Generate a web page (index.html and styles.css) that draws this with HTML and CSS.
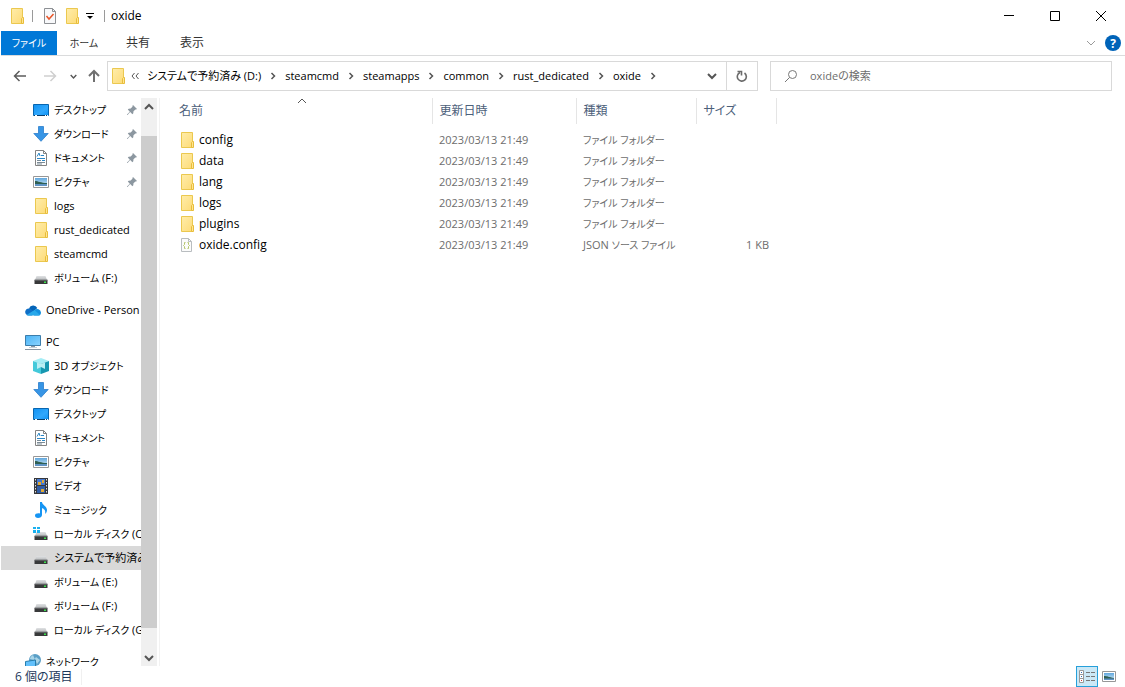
FILE: index.html
```html
<!DOCTYPE html>
<html lang="ja">
<head>
    <meta charset="UTF-8">
    <meta name="viewport" content="width=device-width, initial-scale=1.0">
    <title>oxide</title>
    <link rel="stylesheet" href="styles.css">
</head>
<body>
    <!-- shared icons -->
    <svg class="sprite" aria-hidden="true">
        <defs>
            <linearGradient id="gFolder" x1="0" y1="0" x2="1" y2="1"><stop offset="0" stop-color="#ffedaa"/><stop offset="1" stop-color="#fddb78"/></linearGradient>
            <linearGradient id="gScreen" x1="0" y1="0" x2="1" y2="1"><stop offset="0" stop-color="#1192f2"/><stop offset="0.6" stop-color="#31a8fd"/><stop offset="1" stop-color="#0d92f5"/></linearGradient>
            <linearGradient id="gPc" x1="0" y1="0" x2="1" y2="1"><stop offset="0" stop-color="#49b3f5"/><stop offset="1" stop-color="#8ad3ff"/></linearGradient>
            <linearGradient id="gSky" x1="0" y1="0" x2="0" y2="1"><stop offset="0" stop-color="#5fa6dd"/><stop offset="1" stop-color="#d5ecf6"/></linearGradient>
            <linearGradient id="gDrive" x1="0" y1="0" x2="0" y2="1"><stop offset="0" stop-color="#e0e2e4"/><stop offset="1" stop-color="#b5b8ba"/></linearGradient>
        </defs>
        <symbol id="folder" viewBox="0 0 16 16">
            <path d="M2.5.5h11v15h-11z" fill="url(#gFolder)" stroke="#ebc84f"/>
            <path d="M12.5 15.5v-5l1-1h1v6z" fill="#ffe591" stroke="#e8bd3b"/>
        </symbol>
        <symbol id="desktop" viewBox="0 0 16 16">
            <path d="M.5 2.500h15v11H.5z" fill="url(#gScreen)" stroke="#0866b0"/>
            <path d="M1 13.500h14" stroke="#083e6c"/>
            <path d="M2 13.500h2M12 13.500h1M14 13.500h1" stroke="#fff"/>
        </symbol>
        <symbol id="download" viewBox="0 0 16 16">
            <path d="M5.500.500h5v7h4.700L8 15.300.8 7.500h4.700z" fill="#3795e5" stroke="#2b7dcc" stroke-width=".8"/>
        </symbol>
        <symbol id="document" viewBox="0 0 16 16">
            <path d="M2.500.500h8l3 3v12h-11z" fill="#fff" stroke="#838383"/>
            <path d="M10.500.500v3h3" fill="none" stroke="#838383"/>
            <path d="M4 6.500 6 3l1 3M8 5.500h3M4 8.500h8M9 10.500h3" stroke="#2b86c5" fill="none"/>
            <path d="M4 10.500h4M4 12.500h8M4 14h5" stroke="#7b8b96" fill="none"/>
        </symbol>
        <symbol id="picture" viewBox="0 0 16 16">
            <path d="M.5 2.500h15v11H.5z" fill="#fff" stroke="#979797"/>
            <path d="M2 4h12v8H2z" fill="url(#gSky)"/>
            <path d="M2 7c3 0 6 2 12 2v1H2z" fill="#2e5f52"/>
            <path d="M2 10h12v2H2z" fill="#5f93c4"/>
        </symbol>
        <symbol id="drive" viewBox="0 0 16 16">
            <path d="M3.500 6h9L14 10H2z" fill="url(#gDrive)"/>
            <path d="M1.500 10h13v4h-13z" fill="#38393a"/>
            <path d="M1.500 10h13" stroke="#7c7e80"/>
            <path d="M11 11.500h2v1.500h-2z" fill="#3be04c"/>
        </symbol>
        <symbol id="windrive" viewBox="0 0 16 16">
            <use href="#drive"/>
            <path d="M0 1h3v2H0zM4 1h3v2H4zM0 4h3v3H0zM4 4h3v3H4z" fill="#19b0ef"/>
        </symbol>
        <symbol id="onedrive" viewBox="0 0 16 16">
            <path d="M4 6.500A4.500 4.500 0 0 1 12.300 6L8 10z" fill="#0364b8"/>
            <path d="M3.500 13.500a3.500 3.500 0 1 1 2-6.500L10 10l-3 3.500z" fill="#0f6fc6"/>
            <path d="M9.500 8.200A3.800 3.800 0 0 1 16 10.500c0 2-1 3-2.500 3H9z" fill="#1490df"/>
            <path d="M1.500 13 9.500 8l5.500 5c-.5.400-1 .5-1.500.5h-10c-.8 0-1.500-.1-2-.5z" fill="#28a8ea"/>
        </symbol>
        <symbol id="pc" viewBox="0 0 16 16">
            <path d="M.5 1.500h15v10H.5z" fill="url(#gPc)" stroke="#3c7dab"/>
            <path d="M6 12.500h4M0 15.500h16" stroke="#8896a3"/>
            <path d="M4 13.500h8" stroke="#c5d0d8"/>
        </symbol>
        <symbol id="cube" viewBox="0 0 16 16">
            <path d="m0 3 8-3 8 3-8 3z" fill="#a5edf5"/>
            <path d="m0 3 8 3v10l-8-3z" fill="#43c9da"/>
            <path d="m8 6 8-3v10l-8 3z" fill="#1797b0"/>
            <path d="m4 4.500 4 1.500 4-1.500V11l-4-2-4 2z" fill="#b9eef3"/>
        </symbol>
        <symbol id="video" viewBox="0 0 16 16">
            <path d="M1 0h14v16H1z" fill="#36383c"/>
            <path d="M2.500 1v15M13.500 1v15" stroke="#dedede" stroke-dasharray="1.500 1.500"/>
            <path d="M4 1h8v6H4z" fill="#4679cf"/>
            <path d="M4 8h8v7H4z" fill="#315da5"/>
            <path d="M5 4h3v3H5zM9 2h2v3H9zM8 11h3v3H8z" fill="#e1a932"/>
        </symbol>
        <symbol id="music" viewBox="0 0 16 16">
            <path d="M7 0h2c0 3 5 4 5 8 0 2-1 3-2 4 1-4-1-5-3-6v7c0 2-2 3-4 3s-3-1-3-2.500C2 12 4 11 7 11.500z" fill="#1695f3"/>
        </symbol>
        <symbol id="network" viewBox="0 0 16 16">
            <circle cx="10" cy="6" r="6" fill="#5b9fc6"/>
            <path d="M8 1c-2 1-3 3-3 4l4 1 2-3 4 3-3 4" fill="#a9d4e7"/>
            <path d="m.5 7.500 10-1.500v8l-10 1z" fill="#62c0fb" stroke="#287ead"/>
        </symbol>
        <symbol id="json" viewBox="0 0 16 16">
            <path d="M2.500 1.500h7l3 3v10h-10z" fill="#fbfbfb" stroke="#b9bdc0"/>
            <path d="M9.500 1.500v3h3" fill="none" stroke="#b9bdc0"/>
            <path d="M6.500 5.500h-1v2l-1 1 1 1v2h1M8.500 5.500h1v2l1 1-1 1v2h-1" fill="none" stroke="#b4c56a"/>
        </symbol>
        <symbol id="pin" viewBox="0 0 12 12">
            <path d="m7 1 4 4-1 .6-.6-.2L7.500 7.300l-.2 2-.9.900L4.200 8 1.500 11H1v-.5L3.800 7.700 1.800 5.600l.9-.9 2-.2L6.600 2.600 6.400 2z" fill="#8c97a0"/>
        </symbol>
        <symbol id="down" viewBox="0 0 10 10"><path d="m1 3 4 4 4-4" fill="none" stroke="currentColor" stroke-width="2"/></symbol>
        <symbol id="up" viewBox="0 0 10 10"><path d="m1 7 4-4 4 4" fill="none" stroke="currentColor" stroke-width="2"/></symbol>
        <symbol id="right" viewBox="0 0 10 10"><path d="m3.500 2 3 3-3 3" fill="none" stroke="currentColor" stroke-width="1.500"/></symbol>
    </svg>

    <header class="titlebar">
        <svg class="icon"><use href="#folder"/></svg>
        <span class="sep"></span>
        <button class="quick" aria-label="プロパティ">
            <svg class="icon" viewBox="0 0 16 16"><path d="M2.500.500h8l3 3v12h-11z" fill="#f8f9fb" stroke="#8d9094"/><path d="M10.500.500v3h3" fill="none" stroke="#8d9094"/><path d="m4.500 8 2.500 3 4.500-5" fill="none" stroke="#e8562a" stroke-width="1.500"/></svg>
        </button>
        <button class="quick" aria-label="新しいフォルダー"><svg class="icon"><use href="#folder"/></svg></button>
        <button class="quick more" aria-label="カスタマイズ">
            <svg width="8" height="8" viewBox="0 0 8 8"><path d="M0 1.500h8" stroke="#000"/><path d="M1 4h6L4 7z"/></svg>
        </button>
        <span class="sep"></span>
        <span class="title">oxide</span>
        <div class="window-buttons">
            <button aria-label="最小化"><svg width="10" height="10"><path d="M0 4.500h10" stroke="#000"/></svg></button>
            <button aria-label="最大化"><svg width="10" height="10"><path d="M.5.500h9v9h-9z" fill="none" stroke="#000"/></svg></button>
            <button aria-label="閉じる"><svg width="10" height="10"><path d="m0 0 10 10M10 0 0 10" stroke="#000"/></svg></button>
        </div>
    </header>

    <nav class="ribbon">
        <a class="tab file kana" href="#">ファイル</a>
        <a class="tab kana" href="#">ホーム</a>
        <a class="tab" href="#">共有</a>
        <a class="tab" href="#">表示</a>
        <button class="expand" aria-label="リボンの展開"><svg width="10" height="10" viewBox="0 0 10 10"><path d="m1 3 4 4 4-4" fill="none" stroke="#9a9a9a"/></svg></button>
        <button class="help" aria-label="ヘルプ">?</button>
    </nav>

    <div class="navbar">
        <div class="history">
            <button class="back" aria-label="戻る"><svg width="14" height="12" viewBox="0 0 14 12"><path d="M13 6H2M6.500 1 1.500 6l5 5" fill="none" stroke="#5c5c5c" stroke-width="1.500"/></svg></button>
            <button class="forward" aria-label="進む"><svg width="14" height="12" viewBox="0 0 14 12"><path d="M1 6h11M7.500 1l5 5-5 5" fill="none" stroke="#cfcfcf" stroke-width="1.500"/></svg></button>
            <button class="recent" aria-label="最近表示した場所"><svg width="7" height="7"><use href="#down"/></svg></button>
            <button class="parent" aria-label="上へ"><svg width="12" height="14" viewBox="0 0 12 14"><path d="M6 13V2M1 7l5-5 5 5" fill="none" stroke="#707070" stroke-width="2"/></svg></button>
        </div>
        <div class="address">
            <svg class="icon"><use href="#folder"/></svg>
            <span class="laquo"><svg width="8" height="8" viewBox="0 0 8 8"><path d="M3.500 1 1 4l2.500 3M7.500 1 5 4l2.500 3" fill="none" stroke="#555"/></svg></span>
            <a href="#">システムで予約済み (D:)</a>
            <svg class="crumb"><use href="#right"/></svg>
            <a href="#">steamcmd</a>
            <svg class="crumb"><use href="#right"/></svg>
            <a href="#">steamapps</a>
            <svg class="crumb"><use href="#right"/></svg>
            <a href="#">common</a>
            <svg class="crumb"><use href="#right"/></svg>
            <a href="#">rust_dedicated</a>
            <svg class="crumb"><use href="#right"/></svg>
            <a href="#">oxide</a>
            <svg class="crumb"><use href="#right"/></svg>
            <button class="drop" aria-label="以前の場所"><svg width="10" height="10"><use href="#down"/></svg></button>
            <button class="refresh" aria-label="更新"><svg width="12" height="12" viewBox="0 0 12 12"><path d="M8.500 3A4.500 4.500 0 1 1 4 2.500" fill="none" stroke="#6b6b6b" stroke-width="1.600"/><path d="M1.500 1.500h4v4" fill="none" stroke="#6b6b6b" stroke-width="1.600"/></svg></button>
        </div>
        <label class="search">
            <svg width="12" height="12" viewBox="0 0 12 12"><circle cx="7.500" cy="4.500" r="4" fill="none" stroke="#777"/><path d="M4.500 7.500 0 12" stroke="#777"/></svg>
            <input type="text" placeholder="oxideの検索" aria-label="oxideの検索">
        </label>
    </div>

    <div class="main">
        <nav class="tree">
            <ul>
                <li><a class="kana" href="#"><svg class="icon"><use href="#desktop"/></svg>デスクトップ<svg class="pin"><use href="#pin"/></svg></a></li>
                <li><a class="kana" href="#"><svg class="icon"><use href="#download"/></svg>ダウンロード<svg class="pin"><use href="#pin"/></svg></a></li>
                <li><a class="kana" href="#"><svg class="icon"><use href="#document"/></svg>ドキュメント<svg class="pin"><use href="#pin"/></svg></a></li>
                <li><a class="kana" href="#"><svg class="icon"><use href="#picture"/></svg>ピクチャ<svg class="pin"><use href="#pin"/></svg></a></li>
                <li><a href="#"><svg class="icon"><use href="#folder"/></svg>logs</a></li>
                <li><a href="#"><svg class="icon"><use href="#folder"/></svg>rust_dedicated</a></li>
                <li><a href="#"><svg class="icon"><use href="#folder"/></svg>steamcmd</a></li>
                <li><a href="#"><svg class="icon"><use href="#drive"/></svg><span><span class="kana">ボリューム</span> (F:)</span></a></li>
            </ul>
            <ul>
                <li><a class="root" href="#"><svg class="icon"><use href="#onedrive"/></svg>OneDrive - Person</a></li>
            </ul>
            <ul>
                <li><a class="root" href="#"><svg class="icon"><use href="#pc"/></svg>PC</a></li>
                <li><a href="#"><svg class="icon"><use href="#cube"/></svg><span>3D <span class="kana">オブジェクト</span></span></a></li>
                <li><a class="kana" href="#"><svg class="icon"><use href="#download"/></svg>ダウンロード</a></li>
                <li><a class="kana" href="#"><svg class="icon"><use href="#desktop"/></svg>デスクトップ</a></li>
                <li><a class="kana" href="#"><svg class="icon"><use href="#document"/></svg>ドキュメント</a></li>
                <li><a class="kana" href="#"><svg class="icon"><use href="#picture"/></svg>ピクチャ</a></li>
                <li><a class="kana" href="#"><svg class="icon"><use href="#video"/></svg>ビデオ</a></li>
                <li><a class="kana" href="#"><svg class="icon"><use href="#music"/></svg>ミュージック</a></li>
                <li><a href="#"><svg class="icon"><use href="#windrive"/></svg><span><span class="kana">ローカル ディスク</span> (C:)</span></a></li>
                <li><a class="selected" href="#"><svg class="icon"><use href="#drive"/></svg>システムで予約済み</a></li>
                <li><a href="#"><svg class="icon"><use href="#drive"/></svg><span><span class="kana">ボリューム</span> (E:)</span></a></li>
                <li><a href="#"><svg class="icon"><use href="#drive"/></svg><span><span class="kana">ボリューム</span> (F:)</span></a></li>
                <li><a href="#"><svg class="icon"><use href="#drive"/></svg><span><span class="kana">ローカル ディスク</span> (G:)</span></a></li>
            </ul>
            <ul>
                <li><a class="root kana" href="#"><svg class="icon"><use href="#network"/></svg>ネットワーク</a></li>
            </ul>
        </nav>
        <div class="scrollbar">
            <button aria-label="上へスクロール"><svg width="10" height="10"><use href="#up"/></svg></button>
            <div class="track"><div class="thumb"></div></div>
            <button aria-label="下へスクロール"><svg width="10" height="10"><use href="#down"/></svg></button>
        </div>

        <section class="files">
            <table>
                <thead>
                    <tr>
                        <th class="name">名前<svg class="sort" viewBox="0 0 10 6"><path d="m1 5 4-4 4 4" fill="none" stroke="#555"/></svg></th>
                        <th class="date">更新日時</th>
                        <th class="type">種類</th>
                        <th class="size">サイズ</th>
                    </tr>
                </thead>
                <tbody>
                    <tr><td><a href="#"><svg class="icon"><use href="#folder"/></svg>config</a></td><td>2023/03/13 21:49</td><td class="kana">ファイル フォルダー</td><td></td></tr>
                    <tr><td><a href="#"><svg class="icon"><use href="#folder"/></svg>data</a></td><td>2023/03/13 21:49</td><td class="kana">ファイル フォルダー</td><td></td></tr>
                    <tr><td><a href="#"><svg class="icon"><use href="#folder"/></svg>lang</a></td><td>2023/03/13 21:49</td><td class="kana">ファイル フォルダー</td><td></td></tr>
                    <tr><td><a href="#"><svg class="icon"><use href="#folder"/></svg>logs</a></td><td>2023/03/13 21:49</td><td class="kana">ファイル フォルダー</td><td></td></tr>
                    <tr><td><a href="#"><svg class="icon"><use href="#folder"/></svg>plugins</a></td><td>2023/03/13 21:49</td><td class="kana">ファイル フォルダー</td><td></td></tr>
                    <tr><td><a href="#"><svg class="icon"><use href="#json"/></svg>oxide.config</a></td><td>2023/03/13 21:49</td><td>JSON <span class="kana">ソース ファイル</span></td><td class="num">1 KB</td></tr>
                </tbody>
            </table>
        </section>
    </div>

    <footer class="status">
        <span class="count">6 個の項目</span>
        <div class="views">
            <button class="active" aria-label="詳細"><svg width="18" height="16" viewBox="0 0 18 16"><path d="M1.500 1.500h4v12h-4zM1.500 5.500h4M1.500 9.500h4" fill="#fff" stroke="#999"/><path d="M3 3.500h1M3 7.500h1" stroke="#2c70b8"/><path d="M3 11.500h1" stroke="#c33"/><path d="M8 3.500h4M13 3.500h4M8 7.500h4M13 7.500h4M8 11.500h4M13 11.500h4" stroke="#777"/></svg></button>
            <button aria-label="大アイコン"><svg width="14" height="11" viewBox="0 0 14 11"><path d="M.5.500h13v10H.5z" fill="#fff" stroke="#979797"/><path d="M2 2h10v7H2z" fill="url(#gSky)"/><path d="M2 5c3 0 5 1 10 2v1H2z" fill="#2e5f52"/><path d="M2 7.500h10V9H2z" fill="#5f93c4"/></svg></button>
        </div>
    </footer>
</body>
</html>
```
FILE: styles.css
```css
* {
    box-sizing: border-box;
}

body {
    display: flex;
    flex-direction: column;
    height: 100vh;
    margin: 0;
    padding-left: 1px;
    overflow: hidden;
    background-color: #fff;
    color: #000;
    font-family: "Open Sans", "Noto Sans CJK JP", sans-serif;
    font-size: 12px;
    line-height: 16px;
    font-feature-settings: "palt";
}

a {
    color: inherit;
    text-decoration: none;
}

button {
    display: flex;
    align-items: center;
    justify-content: center;
    padding: 0;
    border: none;
    background: none;
    color: #555;
    font-family: inherit;
}

svg {
    display: block;
    flex: none;
}

.sprite {
    position: absolute;
    width: 0;
    height: 0;
}

.icon {
    width: 16px;
    height: 16px;
}

/* title bar */
.titlebar {
    display: flex;
    align-items: center;
    height: 31px;
    padding-left: 8px;
}

.sep {
    width: 1px;
    height: 12px;
    margin: 0 6px 0 7px;
    background-color: #9a9a9a;
}

.quick {
    width: 22px;
    height: 22px;
}

.quick.more {
    width: 14px;
}

.title {
    flex: 1;
}

.window-buttons {
    display: flex;
    padding-right: 1px;
}

.window-buttons button {
    width: 46px;
    height: 30px;
}

/* ribbon */
.ribbon {
    display: flex;
    align-items: center;
    height: 25px;
    border-bottom: 1px solid #dadbdc;
}

.tab {
    width: 54px;
    line-height: 24px;
    text-align: center;
    color: #333;
}

.tab.file {
    width: 56px;
    background-color: #0078d7;
    color: #fff;
}

.expand {
    width: 20px;
    height: 20px;
    margin-left: auto;
}

.help {
    width: 16px;
    height: 16px;
    margin: 0 4px;
    border-radius: 50%;
    background-color: #0063b8;
    color: #fff;
    font-size: 12px;
    font-weight: bold;
}

/* address row */
.navbar {
    display: grid;
    grid-template-columns: 106px 651fr 354fr;
    height: 41px;
    padding: 5px 13px 6px 0;
}

.history {
    display: flex;
    padding-left: 4px;
}

.back,
.forward {
    width: 30px;
}

.recent {
    width: 16px;
}

.parent {
    width: 26px;
}

.address {
    display: flex;
    align-items: center;
    padding-left: 2px;
    border: 1px solid #d9d9d9;
    font-size: 11px;
    white-space: nowrap;
}

.laquo {
    padding: 0 8px 0 5px;
}

.crumb {
    width: 10px;
    height: 10px;
    margin: 0 7px;
    color: #555;
}

.drop {
    width: 28px;
    height: 28px;
    margin-left: auto;
}

.refresh {
    width: 31px;
    height: 28px;
    border-left: 1px solid #d9d9d9;
}

.search {
    display: flex;
    align-items: center;
    gap: 13px;
    margin-left: 12px;
    padding-left: 14px;
    border: 1px solid #d9d9d9;
}

.search input {
    flex: 1;
    min-width: 0;
    padding: 0;
    border: none;
    outline: none;
    font: inherit;
    font-size: 11px;
}

.search input::placeholder {
    color: #6d6d6d;
}

/* navigation tree */
.main {
    display: flex;
    flex: 1;
    min-height: 0;
    padding-top: 1px;
}

.tree {
    width: 140px;
    overflow: hidden;
    font-size: 11px;
}

.tree ul {
    margin: 0 0 8px;
    padding: 0;
    list-style: none;
}

.tree a {
    display: flex;
    align-items: center;
    gap: 5px;
    height: 24px;
    padding-left: 32px;
    white-space: nowrap;
}

.tree .root {
    padding-left: 24px;
}

.tree .selected {
    background-color: #d9d9d9;
}

.pin {
    width: 12px;
    height: 12px;
    margin: 0 3px 0 auto;
}

.scrollbar {
    display: flex;
    flex-direction: column;
    width: 16px;
    background-color: #f0f0f0;
}

.scrollbar button {
    height: 17px;
}

.track {
    display: flex;
    flex: 1;
    flex-direction: column;
    justify-content: center;
}

.thumb {
    height: 92%;
    background-color: #cdcdcd;
}

/* file list */
.files {
    flex: 1;
    margin-left: 2px;
    padding-left: 12px;
    border-left: 1px solid #f2f2f2;
}

table {
    border-collapse: collapse;
    table-layout: fixed;
    width: 604px;
}

th,
td {
    padding: 0 7px;
    text-align: left;
    white-space: nowrap;
}

th {
    height: 26px;
    border-right: 1px solid #e5e5e5;
    color: #4c607a;
    font-weight: normal;
}

.name {
    position: relative;
    width: 260px;
}

.date {
    width: 144px;
}

.type {
    width: 120px;
}

.size {
    width: 80px;
}

.sort {
    position: absolute;
    top: 0;
    left: 50%;
    width: 10px;
    height: 6px;
    margin-left: -5px;
}

tbody::before {
    content: "";
    display: block;
    height: 5px;
}

td {
    height: 21px;
    color: #6d6d6d;
    font-size: 11px;
}

td a {
    display: flex;
    align-items: center;
    gap: 4px;
    color: #000;
    font-size: 12px;
}

td.num {
    text-align: right;
}

/* kana runs are set smaller than the kanji and latin text */
.kana {
    font-size: 10px;
}

/* status bar */
.status {
    display: flex;
    align-items: center;
    justify-content: space-between;
    height: 21px;
    padding: 0 5px 0 14px;
    color: #1e395b;
}

.count {
    padding-right: 8px;
    border-right: 1px solid #f0f0f0;
}

.views {
    display: flex;
}

.views button {
    width: 22px;
    height: 21px;
}

.views .active {
    border: 1px solid #26a0da;
    background-color: #cbe8f6;
}
```
